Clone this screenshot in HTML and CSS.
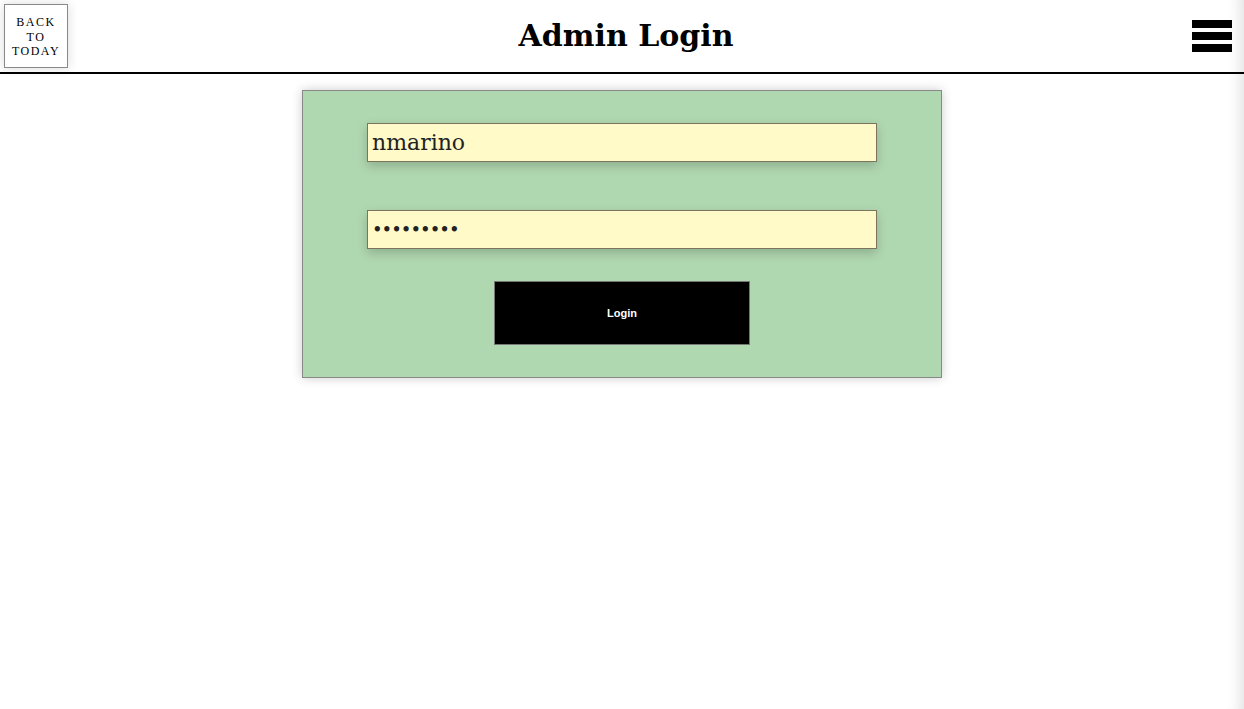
FILE: index.html
```html
<!DOCTYPE html>
<html>
<head>
<meta charset="utf-8">
<link rel="stylesheet" href="styles.css">
</head>
<body>
<header class="topbar">
  <a class="back-btn" href="#">BACK<br>TO<br>TODAY</a>
  <h1 class="title">Admin Login</h1>
  <div class="burger"><span></span><span></span><span></span></div>
</header>
<main class="content">
  <form class="card">
    <input class="field" type="text" value="nmarino">
    <input class="field pw" type="password" value="password1">
    <button class="login-btn" type="button">Login</button>
  </form>
</main>
</body>
</html>
```
FILE: styles.css
```css
html, body {
  margin: 0;
  padding: 0;
  background: #fff;
  overflow: hidden;
  height: 100%;
}
html {
  box-shadow: inset -16px 0 14px -12px rgba(0,0,0,0.12);
}
body {
  font-family: "DejaVu Serif", Georgia, serif;
  background: transparent;
}
.topbar {
  height: 72px;
  border-bottom: 2px solid #000;
  display: flex;
  align-items: center;
  justify-content: space-between;
  padding: 0 12px 0 4px;
}
.back-btn {
  width: 62px;
  border: 1px solid #888;
  box-shadow: 0 0 10px rgba(0,0,0,0.15);
  display: flex;
  align-items: center;
  justify-content: center;
  text-align: center;
  font-family: "Liberation Serif", serif;
  font-size: 12px;
  line-height: 14.5px;
  letter-spacing: 1.5px;
  color: #000;
  text-decoration: none;
  padding-top: 2px;
  box-sizing: content-box;
  height: 60px;
}
.title {
  margin: -2px 0 0 -8px;
  font-family: "DejaVu Serif", Georgia, serif;
  font-weight: bold;
  font-size: 30px;
}
.burger {
  width: 40px;
  display: flex;
  flex-direction: column;
  gap: 4px;
  margin-top: -1px;
}
.burger span {
  display: block;
  height: 8px;
  background: #000;
}
.content {
  display: flex;
  justify-content: center;
  padding-top: 16px;
}
.card {
  width: 638px;
  background: #b0d8b0;
  border: 1px solid #888;
  box-shadow: 0 0 10px rgba(0,0,0,0.2);
  display: flex;
  flex-direction: column;
  align-items: center;
  padding: 32px 0 32px;
  margin: 0;
}
.field {
  width: 510px;
  height: 39px;
  box-sizing: border-box;
  border: 1px solid #7d745f;
  background: #fffac8;
  box-shadow: 0 4px 10px rgba(0,0,0,0.2);
  font-family: "DejaVu Serif", Georgia, serif;
  font-size: 22px;
  color: #222;
  padding: 0 4px;
  margin: 0;
  outline: none;
}
.field.pw {
  margin-top: 48px;
  font-size: 18px;
  letter-spacing: -1px;
}
.login-btn {
  margin-top: 32px;
  width: 256px;
  height: 64px;
  background: #000;
  color: #fff;
  border: 1px solid #777;
  font-family: "Liberation Sans", Arial, sans-serif;
  font-weight: bold;
  font-size: 11px;
  cursor: pointer;
}
```
